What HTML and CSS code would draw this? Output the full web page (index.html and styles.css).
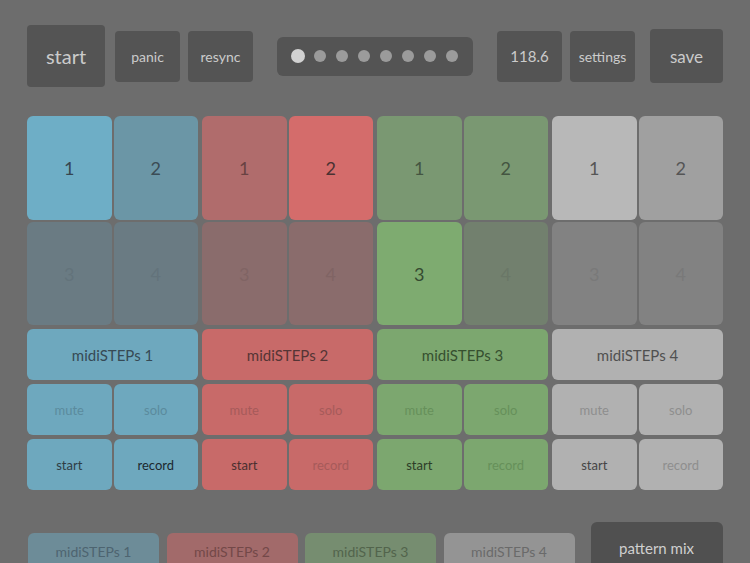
FILE: index.html
```html
<!DOCTYPE html>
<html>
<head>
<meta charset="utf-8">
<link rel="stylesheet" href="styles.css">
</head>
<body>
<div class="app">
  <div class="topbar">
    <div class="btn btn-start">start</div>
    <div class="btn btn-sm">panic</div>
    <div class="btn btn-sm gap8">resync</div>
    <div class="dots">
      <span class="dot big"></span><span class="dot"></span><span class="dot"></span><span class="dot"></span><span class="dot"></span><span class="dot"></span><span class="dot"></span><span class="dot"></span>
    </div>
    <div class="btn btn-sm bpm">118.6</div>
    <div class="btn btn-sm gap8">settings</div>
    <div class="btn btn-save">save</div>
  </div>

  <div class="channels">
    <div class="ch blue">
      <div class="pads">
        <div class="pad p-on">1</div>
        <div class="pad p-mid">2</div>
        <div class="pad p-off">3</div>
        <div class="pad p-off">4</div>
      </div>
      <div class="cell head">midiSTEPs 1</div>
      <div class="row2">
        <div class="cell dim">mute</div>
        <div class="cell dim">solo</div>
      </div>
      <div class="row2">
        <div class="cell dark">start</div>
        <div class="cell darker">record</div>
      </div>
    </div>

    <div class="ch red">
      <div class="pads">
        <div class="pad p-mid">1</div>
        <div class="pad p-on">2</div>
        <div class="pad p-off">3</div>
        <div class="pad p-off">4</div>
      </div>
      <div class="cell head">midiSTEPs 2</div>
      <div class="row2">
        <div class="cell dim">mute</div>
        <div class="cell dim">solo</div>
      </div>
      <div class="row2">
        <div class="cell dark">start</div>
        <div class="cell dim">record</div>
      </div>
    </div>

    <div class="ch green">
      <div class="pads">
        <div class="pad p-mid">1</div>
        <div class="pad p-mid">2</div>
        <div class="pad p-on">3</div>
        <div class="pad p-off">4</div>
      </div>
      <div class="cell head">midiSTEPs 3</div>
      <div class="row2">
        <div class="cell dim">mute</div>
        <div class="cell dim">solo</div>
      </div>
      <div class="row2">
        <div class="cell dark">start</div>
        <div class="cell dim">record</div>
      </div>
    </div>

    <div class="ch grey">
      <div class="pads">
        <div class="pad p-on">1</div>
        <div class="pad p-mid">2</div>
        <div class="pad p-off">3</div>
        <div class="pad p-off">4</div>
      </div>
      <div class="cell head">midiSTEPs 4</div>
      <div class="row2">
        <div class="cell dim">mute</div>
        <div class="cell dim">solo</div>
      </div>
      <div class="row2">
        <div class="cell dark">start</div>
        <div class="cell dim">record</div>
      </div>
    </div>
  </div>

  <div class="bottom">
    <div class="tabs">
      <div class="tab tab-blue">midiSTEPs 1</div>
      <div class="tab tab-red">midiSTEPs 2</div>
      <div class="tab tab-green">midiSTEPs 3</div>
      <div class="tab tab-grey">midiSTEPs 4</div>
    </div>
    <div class="pattern">pattern mix</div>
  </div>
</div>
</body>
</html>
```

FILE: styles.css
```css
html, body {
  margin: 0;
  padding: 0;
  height: 563px;
  overflow: hidden;
  background: #6d6d6d;
}
body {
  font-family: "Lato", "Noto Sans", "DejaVu Sans", sans-serif;
}
.app {
  padding: 25px 27px 0 27px;
  width: 696px;
}

/* top bar */
.topbar {
  display: flex;
  align-items: center;
  height: 62px;
}
.btn {
  background: #545454;
  color: #cbcbcb;
  display: flex;
  align-items: center;
  justify-content: center;
  border-radius: 4px;
}
.btn-start {
  width: 78px;
  height: 62px;
  font-size: 20px;
  margin-right: 10px;
}
.btn-sm {
  width: 65px;
  height: 51px;
  font-size: 14px;
}
.gap8 { margin-left: 8px; }
.bpm { font-size: 15px; margin-left: 24px; }
.btn-save {
  width: 73px;
  height: 54px;
  font-size: 17px;
  margin-left: 15px;
}
.dots {
  margin-left: 24px;
  width: 196px;
  height: 39px;
  background: #545454;
  border-radius: 6px;
  display: flex;
  align-items: center;
  padding-left: 14px;
  box-sizing: border-box;
  gap: 10px;
}
.dot {
  width: 12px;
  height: 12px;
  border-radius: 50%;
  background: #9b9b9b;
}
.dot.big {
  width: 14px;
  height: 14px;
  background: #d2d2d2;
  margin-right: -1px;
}

/* channels */
.channels {
  margin-top: 29px;
  display: grid;
  grid-template-columns: repeat(4, 171px);
  column-gap: 4px;
}
.ch {
  display: flex;
  flex-direction: column;
  gap: 4px;
}
.pads {
  display: grid;
  grid-template-columns: 1fr 1fr;
  grid-template-rows: 104px 103px;
  gap: 2px;
}
.pad {
  border-radius: 6px;
  display: flex;
  align-items: center;
  justify-content: center;
  font-size: 18px;
}
.row2 {
  display: grid;
  grid-template-columns: 1fr 1fr;
  gap: 2px;
}
.cell {
  height: 51px;
  border-radius: 6px;
  display: flex;
  align-items: center;
  justify-content: center;
  font-size: 13px;
}
.cell.head { font-size: 15px; }

/* blue */
.blue .p-on { background: #6eaec6; color: #364650; }
.blue .p-mid { background: #6b96a6; color: #3b4c55; }
.blue .p-off { background: #6a7b83; color: #63737b; }
.blue .cell { background: #6ea8be; }
.blue .head { color: #364a55; }
.blue .dim { color: #5b8b9d; }
.blue .dark { color: #2e3d45; }
.blue .darker { color: #1c282f; }

/* red */
.red .p-on { background: #d46c6b; color: #4a3232; }
.red .p-mid { background: #b06c6c; color: #684242; }
.red .p-off { background: #8a6c6c; color: #806464; }
.red .cell { background: #c86a69; }
.red .head { color: #553535; }
.red .dim { color: #a65a5a; }
.red .dark { color: #4a2f2f; }

/* green */
.green .p-on { background: #7eab70; color: #354a30; }
.green .p-mid { background: #7a9872; color: #445541; }
.green .p-off { background: #72806e; color: #6a7767; }
.green .cell { background: #7ca76f; }
.green .head { color: #36502f; }
.green .dim { color: #66905a; }
.green .dark { color: #2d3d28; }

/* grey */
.grey .p-on { background: #b8b8b8; color: #555555; }
.grey .p-mid { background: #a0a0a0; color: #555555; }
.grey .p-off { background: #828282; color: #797979; }
.grey .cell { background: #b1b1b1; }
.grey .head { color: #505050; }
.grey .dim { color: #8e8e8e; }
.grey .dark { color: #454545; }

/* bottom */
.bottom {
  margin-top: 32px;
  display: flex;
  align-items: flex-start;
}
.tabs {
  margin-top: 11px;
  margin-left: 1px;
  display: flex;
  gap: 7.5px;
}
.tab {
  width: 131px;
  height: 40px;
  border-radius: 6px 6px 0 0;
  font-size: 14px;
  display: flex;
  justify-content: center;
  padding-top: 10px;
  box-sizing: border-box;
}
.tab-blue { background: #6d8c98; color: #4d6470; }
.tab-red { background: #a26a6a; color: #734848; }
.tab-green { background: #768d70; color: #52644c; }
.tab-grey { background: #949494; color: #6a6a6a; }
.pattern {
  margin-left: 16px;
  width: 132px;
  height: 52px;
  background: #505050;
  color: #cfcfcf;
  border-radius: 6px 6px 0 0;
  font-size: 15px;
  display: flex;
  justify-content: center;
  padding-top: 17px;
  box-sizing: border-box;
}
```
